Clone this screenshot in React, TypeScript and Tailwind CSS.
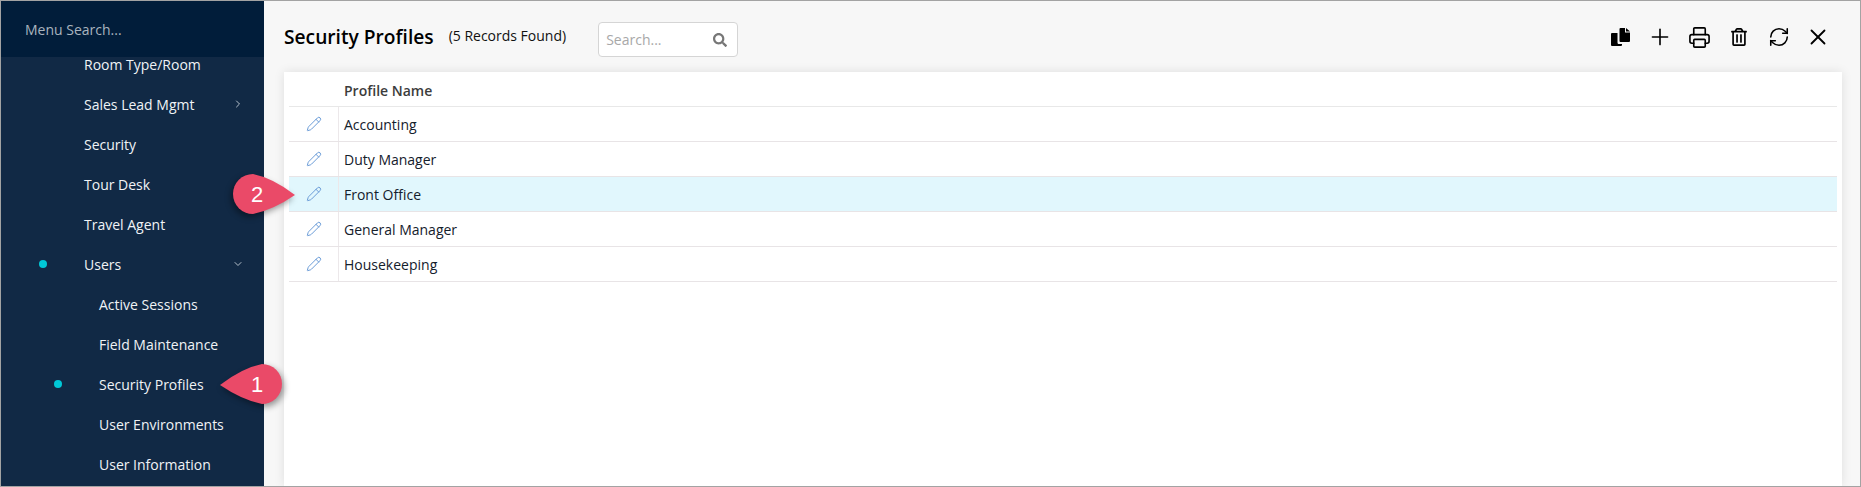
import { Pencil, Plus, Printer, RefreshCw, X, ChevronRight, ChevronDown } from 'lucide-react';
import { FaRegTrashAlt, FaSearch } from 'react-icons/fa';

const menuItems = [
  { label: 'Room Type/Room' },
  { label: 'Sales Lead Mgmt', arrow: 'right' },
  { label: 'Security' },
  { label: 'Tour Desk' },
  { label: 'Travel Agent' },
  { label: 'Users', arrow: 'down', dot: true },
  { label: 'Active Sessions', sub: true },
  { label: 'Field Maintenance', sub: true },
  { label: 'Security Profiles', sub: true, dot: true },
  { label: 'User Environments', sub: true },
  { label: 'User Information', sub: true },
];

const profiles = ['Accounting', 'Duty Manager', 'Front Office', 'General Manager', 'Housekeeping'];

function MenuRow({ item }: { item: (typeof menuItems)[number] }) {
  return (
    <div className={`relative flex h-10 shrink-0 items-center text-[14px] text-[#f0f3f6] ${item.sub ? 'pl-[98px]' : 'pl-[83px]'}`}>
      {item.dot && (
        <span className={`absolute h-2 w-2 rounded-full bg-[#00c8d7] ${item.sub ? 'left-[53px]' : 'left-[38px]'}`} />
      )}
      <span>{item.label}</span>
      {item.arrow === 'right' && <ChevronRight className="absolute left-[231px] h-3 w-3 text-[#b4bfca]" />}
      {item.arrow === 'down' && <ChevronDown className="absolute left-[231px] h-3 w-3 text-[#b4bfca]" />}
    </div>
  );
}

function Callout({ n, flip, className }: { n: string; flip?: boolean; className: string }) {
  return (
    <div className={`absolute z-20 h-10 w-[62px] ${className}`}>
      <svg
        viewBox="0 0 62 40"
        className={`h-10 w-[62px] drop-shadow-[2px_3px_3px_rgba(0,0,0,0.4)] ${flip ? '-scale-x-100' : ''}`}
      >
        <path d="M0 21 Q22 4 42 0 A20 20 0 1 1 42 40 Q22 36 0 21Z" fill="#ea4a68" />
      </svg>
      <span
        className={`absolute top-0 flex h-10 w-6 items-center justify-center font-['Liberation_Sans',sans-serif] text-[22px] text-white ${flip ? 'left-3' : 'left-[25px]'}`}
      >
        {n}
      </span>
    </div>
  );
}

function CopyIcon() {
  return (
    <svg viewBox="0 0 19 18" className="h-[18px] w-[19px]" fill="currentColor">
      <path d="M1 5h5.5v9.5c0 1 .6 1.5 1.5 1.5h3v1a1 1 0 0 1-1 1H1a1 1 0 0 1-1-1V6a1 1 0 0 1 1-1z" />
      <path d="M8.5 1a1 1 0 0 1 1-1H14v4.5h5V13a1 1 0 0 1-1 1H9.5a1 1 0 0 1-1-1z" />
      <path d="M15 0l4 3.6h-4z" />
    </svg>
  );
}

export default function App() {
  return (
    <div className="relative flex h-[487px] w-[1861px] overflow-hidden border border-[#a3a3a3] bg-[#f7f7f7] font-['Open_Sans',sans-serif]">
      {/* Sidebar */}
      <aside className="flex h-full w-[263px] shrink-0 flex-col overflow-hidden bg-[#112945]">
        <div className="relative z-10 flex h-[56px] shrink-0 items-center bg-[#011d3a] pl-[24px] text-[14px] text-[#a9b4bf]">
          Menu Search...
        </div>
        <div className="-mt-[13px] flex flex-col">
          {menuItems.map((item) => (
            <MenuRow key={item.label} item={item} />
          ))}
        </div>
      </aside>

      {/* Main */}
      <main className="flex min-w-0 flex-1 flex-col pl-5 pr-[18px]">
        <div className="flex h-[71px] shrink-0 items-start">
          <h1 className="mt-[21px] text-[19.2px] leading-[30px] font-semibold text-black">Security Profiles</h1>
          <span className="mt-[25px] ml-[15px] text-[14px] leading-[20px] text-[#111]">(5 Records Found)</span>
          <div className="mt-[21px] ml-[32px] flex h-[35px] w-[140px] items-center justify-between rounded border border-[#d5d5d5] bg-white pr-[10px] pl-[7px] text-[14px] text-[#a8a8a8]">
            <span>Search...</span>
            <FaSearch className="h-[14px] w-[14px] text-[#777]" />
          </div>
          <div className="mt-[25px] mr-[4px] ml-auto flex h-[22px] items-center text-black">
            <div className="flex w-[39.6px] justify-center"><CopyIcon /></div>
            <div className="flex w-[39.6px] justify-center"><Plus size={26} strokeWidth={1.5} /></div>
            <div className="flex w-[39.6px] justify-center"><Printer size={23} strokeWidth={1.7} /></div>
            <div className="flex w-[39.6px] justify-center"><FaRegTrashAlt size={18} /></div>
            <div className="flex w-[39.6px] justify-center"><RefreshCw size={22} strokeWidth={1.7} /></div>
            <div className="flex w-[39.6px] justify-center"><X size={26} strokeWidth={1.7} /></div>
          </div>
        </div>

        <div className="flex-1 bg-white px-[5px] shadow-[0_0_10px_rgba(0,0,0,0.1)]">
          <div className="flex h-[35px] items-center border-b border-[#e8e8e8] pt-[3px] pl-[55px] text-[14px] font-semibold text-[#3c3c3c]">
            Profile Name
          </div>
          {profiles.map((name) => (
            <div
              key={name}
              className={`flex h-[35px] items-stretch border-b border-[#e8e4e6] text-[14px] text-[#14202c] ${name === 'Front Office' ? 'bg-[#e1f7fd]' : ''}`}
            >
              <div className="flex w-[50px] items-center justify-center border-r border-[#ece8ea]">
                <Pencil className="h-[16px] w-[16px] text-[#6a9cd8]" strokeWidth={1.5} />
              </div>
              <div className="flex items-center pl-[5px]">{name}</div>
            </div>
          ))}
        </div>
      </main>

      <Callout n="1" className="left-[219px] top-[363px]" />
      <Callout n="2" flip className="left-[232px] top-[173px]" />
    </div>
  );
}
